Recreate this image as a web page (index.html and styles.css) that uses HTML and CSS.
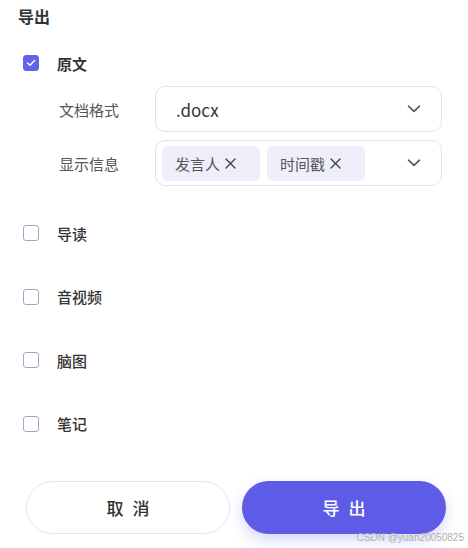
FILE: index.html
```html
<!DOCTYPE html>
<html lang="zh-CN">
<head>
	<meta charset="UTF-8">
	<title>导出</title>
	<link rel="stylesheet" href="styles.css">
</head>
<body>
	<div class="panel">
		<h1 class="title">导出</h1>

		<div class="option">
			<span class="box checked">
				<svg width="10" height="8" viewBox="0 0 10 8"><path d="M1.5 4 L4 6.3 L8.6 1.6" fill="none" stroke="#fff" stroke-width="1.5" stroke-linecap="round" stroke-linejoin="round"/></svg>
			</span>
			<span class="option-label strong">原文</span>
		</div>

		<div class="sub">
			<div class="field">
				<span class="field-label">文档格式</span>
				<div class="select">
					<span class="value">.docx</span>
					<svg class="chevron" width="14" height="8" viewBox="0 0 14 8"><path d="M1.5 1.2 L7 6.3 L12.5 1.2" fill="none" stroke="#555" stroke-width="1.6" stroke-linecap="round" stroke-linejoin="round"/></svg>
				</div>
			</div>
			<div class="field">
				<span class="field-label">显示信息</span>
				<div class="select tags">
					<span class="tag">发言人
						<svg class="x" width="11" height="11" viewBox="0 0 11 11"><path d="M1 1 L10 10 M10 1 L1 10" stroke="#444" stroke-width="1.4" stroke-linecap="round"/></svg>
					</span>
					<span class="tag">时间戳
						<svg class="x" width="11" height="11" viewBox="0 0 11 11"><path d="M1 1 L10 10 M10 1 L1 10" stroke="#444" stroke-width="1.4" stroke-linecap="round"/></svg>
					</span>
					<svg class="chevron" width="14" height="8" viewBox="0 0 14 8"><path d="M1.5 1.2 L7 6.3 L12.5 1.2" fill="none" stroke="#555" stroke-width="1.6" stroke-linecap="round" stroke-linejoin="round"/></svg>
				</div>
			</div>
		</div>

		<div class="list">
			<div class="option"><span class="box"></span><span class="option-label">导读</span></div>
			<div class="option"><span class="box"></span><span class="option-label">音视频</span></div>
			<div class="option"><span class="box"></span><span class="option-label">脑图</span></div>
			<div class="option"><span class="box"></span><span class="option-label">笔记</span></div>
		</div>

		<div class="actions">
			<button class="btn cancel">取消</button>
			<button class="btn primary">导出</button>
		</div>
	</div>
	<div class="mark">CSDN @yuan20050825</div>
</body>
</html>
```
FILE: styles.css
```css
body {
	margin: 0;
	background-color: #fff;
	font-family: "Noto Sans CJK SC", "Noto Sans", sans-serif;
	color: #333;
	width: 468px;
	height: 548px;
	overflow: hidden;
	position: relative;
}
.panel {
	display: flex;
	flex-direction: column;
	padding: 4px 0 0 18px;
}
.title {
	margin: 0;
	font-size: 16px;
	font-weight: 700;
	line-height: 24px;
	color: #333;
}
.option {
	display: flex;
	align-items: center;
	height: 24px;
	margin-top: 23px;
	padding-left: 5px;
}
.box {
	width: 16px;
	height: 16px;
	box-sizing: border-box;
	border: 1.5px solid #a3a6c2;
	border-radius: 3px;
	display: flex;
	align-items: center;
	justify-content: center;
}
.box.checked {
	background-color: #6560e8;
	border-color: #6560e8;
}
.option-label {
	margin-left: 18px;
	font-size: 15px;
	font-weight: 500;
	color: #333;
}
.option-label.strong {
	font-weight: 700;
}
.sub {
	display: flex;
	flex-direction: column;
	gap: 8px;
	margin-top: 11px;
	padding-left: 41px;
}
.field {
	display: flex;
	align-items: center;
}
.field-label {
	width: 96px;
	font-size: 15px;
	color: #555;
}
.select {
	width: 287px;
	height: 46px;
	box-sizing: border-box;
	border: 1px solid #e3e3ea;
	border-radius: 10px;
	display: flex;
	align-items: center;
	padding: 0 20px 0 20px;
}
.select .value {
	font-size: 17px;
	color: #333;
	flex: 1;
}
.select.tags {
	padding-left: 6px;
	gap: 7px;
}
.tag {
	height: 35px;
	width: 98px;
	box-sizing: border-box;
	background-color: #efeffc;
	border-radius: 6px;
	display: flex;
	align-items: center;
	padding-left: 13px;
	font-size: 15px;
	color: #555;
}
.tag .x {
	margin-left: 5px;
}
.chevron {
	margin-left: auto;
}
.list {
	display: flex;
	flex-direction: column;
	gap: 39.5px;
	margin-top: 35px;
}
.list .option {
	margin-top: 0;
}
.actions {
	display: flex;
	gap: 12px;
	margin-top: 45px;
	padding-left: 8px;
}
.btn {
	width: 204px;
	height: 53px;
	border-radius: 27px;
	font-family: "Noto Sans CJK SC", sans-serif;
	font-size: 17px;
	font-weight: 500;
	letter-spacing: 9px;
	text-indent: 9px;
	cursor: pointer;
}
.cancel {
	background-color: #fff;
	border: 1px solid #e4e4ee;
	color: #333;
}
.primary {
	background-color: #5e5ce6;
	border: none;
	color: #fff;
	box-shadow: 0 6px 14px rgba(94, 92, 230, 0.25);
}
.mark {
	position: absolute;
	right: 4px;
	bottom: 5px;
	font-family: "Liberation Sans", sans-serif;
	font-size: 10px;
	color: #b0b0b0;
}
```
